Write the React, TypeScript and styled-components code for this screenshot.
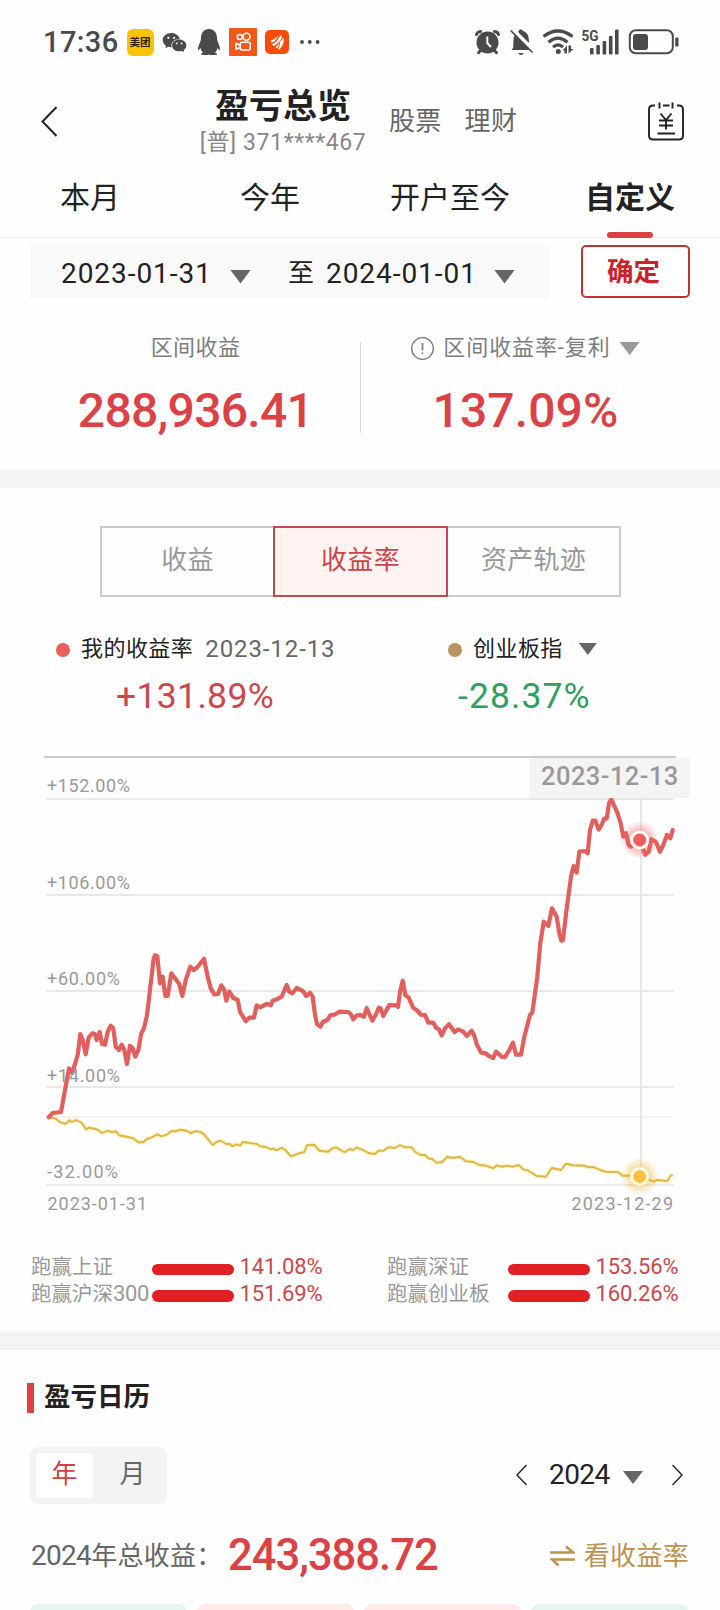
import React from "react";
import styled, { createGlobalStyle, css } from "styled-components";
import { FaQq } from "react-icons/fa";
import { AiFillWechat } from "react-icons/ai";

const colors = {
  ink: "#222222",
  mid: "#666666",
  soft: "#888888",
  pale: "#999999",
  red: "#dc4146",
  redText: "#c9484c",
  green: "#2f9e61",
  gold: "#bb9250",
  band: "#f4f4f4",
};

const GlobalStyle = createGlobalStyle`
  * { box-sizing: border-box; }
  body {
    margin: 0;
    background: #fefefe;
    font-family: Roboto, "Noto Sans CJK SC", sans-serif;
    color: ${colors.ink};
  }
`;

const Page = styled.main`
  width: 720px;
  height: 1610px;
  overflow: hidden;
  display: flex;
  flex-direction: column;
`;

/* ---------- status bar ---------- */

const StatusBar = styled.div`
  height: 84px;
  flex: none;
  padding: 0 41px 0 43px;
  display: flex;
  align-items: center;
  justify-content: space-between;
  color: #4a4a4a;
`;

const StatusGroup = styled.div<{ $gap: number }>`
  display: flex;
  align-items: center;
  gap: ${(p) => p.$gap}px;
`;

const Clock = styled.span`
  width: 76px;
  font-size: 29px;
  font-weight: 500;
  line-height: 36px;
  letter-spacing: 0.4px;
  white-space: nowrap;
`;

const MeituanBadge = styled.span`
  width: 27px;
  height: 27px;
  border-radius: 6px;
  background: #fcc400;
  color: #2a2200;
  font-size: 10.5px;
  font-weight: 700;
  line-height: 28px;
  text-align: center;
`;

const StatusSvg = styled.svg`
  display: block;
  flex: none;
`;

/* ---------- header ---------- */

const Header = styled.header`
  height: 76px;
  flex: none;
  padding: 0 36px 0 40px;
  display: flex;
  align-items: flex-start;
`;

const BackIcon = styled.svg`
  margin-top: 21px;
  display: block;
`;

const TitleBlock = styled.div`
  width: 170px;
  margin-left: 140px;
  display: flex;
  flex-direction: column;
  align-items: center;
`;

const Title = styled.h1`
  margin: 2px 0 0;
  font-size: 34px;
  font-weight: 700;
  line-height: 40px;
  white-space: nowrap;
`;

const Account = styled.span`
  margin-top: 1px;
  font-size: 23px;
  font-weight: 400;
  line-height: 32px;
  letter-spacing: 0.6px;
  color: #888888;
  white-space: nowrap;
`;

const HeaderLink = styled.span<{ $left: number }>`
  margin: 17px 0 0 ${(p) => p.$left}px;
  font-size: 26px;
  line-height: 40px;
  letter-spacing: 0.3px;
  color: ${colors.mid};
`;

const CalendarIcon = styled.svg`
  margin: 18px 0 0 auto;
  display: block;
`;

/* ---------- period tabs ---------- */

const Tabs = styled.nav`
  height: 78px;
  flex: none;
  display: grid;
  grid-template-columns: repeat(4, 1fr);
  border-bottom: 1px solid #ebebeb;
`;

const Tab = styled.div<{ $active?: boolean }>`
  position: relative;
  padding-top: 18px;
  font-size: 30px;
  font-weight: ${(p) => (p.$active ? 700 : 400)};
  line-height: 40px;
  text-align: center;

  ${(p) =>
    p.$active &&
    css`
      &::after {
        content: "";
        position: absolute;
        left: 67px;
        bottom: -1px;
        width: 46px;
        height: 6px;
        border-radius: 3px;
        background: ${colors.red};
      }
    `}
`;

/* ---------- custom range ---------- */

const RangeRow = styled.div`
  flex: none;
  height: 53px;
  margin: 7px 30px 0;
  display: flex;
  justify-content: space-between;
`;

const RangeBox = styled.div`
  width: 519px;
  height: 53px;
  padding-left: 31px;
  display: flex;
  align-items: center;
  background: #f9f9f9;
`;

const DateText = styled.span`
  width: 148px;
  font-size: 28px;
  line-height: 53px;
  padding-top: 3px;
  letter-spacing: 0.95px;
  white-space: nowrap;
`;

const RangeWord = styled.span`
  width: 27px;
  margin: 0 11px 0 37px;
  padding-top: 3px;
  font-size: 26px;
  line-height: 53px;
`;

const Arrow = styled.span<{ $w: number; $h: number; $color: string; $left: number; $top?: number }>`
  width: ${(p) => p.$w}px;
  height: ${(p) => p.$h}px;
  margin-left: ${(p) => p.$left}px;
  margin-top: ${(p) => p.$top ?? 0}px;
  flex: none;
  background: ${(p) => p.$color};
  clip-path: polygon(0 0, 100% 0, 50% 100%);
`;

const ConfirmButton = styled.button`
  width: 109px;
  height: 53px;
  padding: 1px 4px 0 0;
  border: 2px solid #bf3236;
  border-radius: 5px;
  background: #fff;
  color: #c92228;
  font-family: inherit;
  font-size: 26.5px;
  font-weight: 700;
  line-height: 48px;
`;

/* ---------- interval stats ---------- */

const Stats = styled.section`
  flex: none;
  height: 171px;
  padding-top: 33px;
  display: flex;
`;

const StatDivider = styled.div`
  width: 1px;
  height: 91px;
  margin-top: 11px;
  background: #dadada;
`;

const Stat = styled.div<{ $shift: number }>`
  flex: 1;
  padding-left: ${(p) => Math.max(0, p.$shift)}px;
  padding-right: ${(p) => Math.max(0, -p.$shift)}px;
  display: flex;
  flex-direction: column;
  align-items: center;
`;

const StatLabel = styled.div<{ $track: number }>`
  height: 34px;
  display: flex;
  align-items: center;
  font-size: 22px;
  line-height: 34px;
  letter-spacing: ${(p) => p.$track}px;
  color: #7d7d7d;
  white-space: nowrap;
`;

const InfoIcon = styled.svg`
  margin: 0 9px 0 0;
  display: block;
`;

const StatValue = styled.div<{ $track: number }>`
  margin-top: 16px;
  font-size: 48px;
  font-weight: 500;
  line-height: 60px;
  letter-spacing: ${(p) => p.$track}px;
  color: ${colors.red};
`;

const Band = styled.div`
  flex: none;
  height: 19px;
  background: ${colors.band};
`;

/* ---------- segmented control ---------- */

const Segments = styled.div`
  flex: none;
  width: 521px;
  height: 71px;
  margin: 38px 0 0 100px;
  display: flex;
`;

const Segment = styled.div<{ $active?: boolean }>`
  width: 175px;
  height: 71px;
  border: 2px solid ${(p) => (p.$active ? "#c6474b" : "#cbcbcb")};
  background: ${(p) => (p.$active ? "#fff3f2" : "transparent")};
  color: ${(p) => (p.$active ? "#cf4448" : colors.pale)};
  font-size: 26px;
  letter-spacing: 0.3px;
  line-height: 65px;
  text-align: center;
  position: relative;
  z-index: ${(p) => (p.$active ? 1 : 0)};

  & + & {
    margin-left: -2px;
  }
`;

/* ---------- legend ---------- */

const Legend = styled.div`
  flex: none;
  height: 160px;
  padding: 34px 0 0 56px;
  display: grid;
  grid-template-columns: 392px 1fr;
  align-content: start;
`;

const LegendName = styled.div`
  height: 36px;
  display: flex;
  align-items: center;
  font-size: 22px;
  line-height: 36px;
  letter-spacing: 0.45px;
  white-space: nowrap;
`;

const LegendDot = styled.i<{ $color: string }>`
  width: 13.5px;
  height: 14px;
  margin: 2px 11.5px 0 0;
  border-radius: 50%;
  background: ${(p) => p.$color};
`;

const LegendDate = styled.span`
  margin-left: 12px;
  font-size: 24px;
  letter-spacing: 0.9px;
  color: ${colors.mid};
`;

const LegendValue = styled.div<{ $color: string; $left: number; $track: number }>`
  padding-left: ${(p) => p.$left}px;
  margin-top: 7px;
  font-size: 35.5px;
  line-height: 44px;
  letter-spacing: ${(p) => p.$track}px;
  color: ${(p) => p.$color};
`;

/* ---------- chart ---------- */

const ChartArea = styled.div`
  position: relative;
  flex: none;
  height: 494px;
`;

const ChartSvg = styled.svg`
  display: block;
  overflow: visible;

  text {
    font-size: 18px;
    fill: #999999;
  }
`;

const ChartTooltip = styled.div`
  position: absolute;
  left: 529px;
  top: 1px;
  width: 161px;
  height: 40px;
  padding-left: 12px;
  background: ${colors.band};
  color: ${colors.pale};
  font-size: 25.5px;
  font-weight: 500;
  line-height: 37px;
  letter-spacing: 0.45px;
  white-space: nowrap;
`;

/* ---------- benchmark comparison ---------- */

const Benchmarks = styled.div`
  flex: none;
  height: 80px;
  padding: 3px 0 0 31px;
  display: grid;
  grid-template-columns: 356px 1fr;
  grid-auto-rows: 26.5px;
`;

const Benchmark = styled.div`
  display: flex;
  align-items: center;
  line-height: 26px;
  font-size: 20.5px;
  color: ${colors.pale};
  white-space: nowrap;
`;

const BenchmarkName = styled.span`
  width: 121px;

  b {
    font-weight: 400;
    font-size: 22px;
    letter-spacing: -0.4px;
  }
`;

const BenchmarkBar = styled.i`
  width: 82px;
  height: 11.5px;
  margin-top: 4px;
  border-radius: 6px;
  background: #e02022;
`;

const BenchmarkValue = styled.span`
  margin-left: 5.5px;
  font-size: 22px;
  letter-spacing: -0.1px;
  color: ${colors.redText};
`;

/* ---------- calendar section ---------- */

const SectionTitle = styled.h2`
  flex: none;
  height: 30px;
  margin: 33px 0 0 27px;
  padding-left: 10px;
  border-left: 7px solid #e04045;
  font-size: 26.5px;
  font-weight: 700;
  line-height: 27px;
`;

const CalendarControls = styled.div`
  flex: none;
  height: 57px;
  margin: 34px 37px 0 30px;
  display: flex;
  align-items: center;
  justify-content: space-between;
`;

const Toggle = styled.div`
  width: 137px;
  height: 57px;
  padding: 6px;
  display: flex;
  border-radius: 8px;
  background: #f3f3f3;
`;

const ToggleItem = styled.span<{ $active?: boolean }>`
  flex: none;
  width: ${(p) => (p.$active ? 57 : 79)}px;
  height: 45px;
  border-radius: 4px;
  background: ${(p) => (p.$active ? "#ffffff" : "transparent")};
  color: ${(p) => (p.$active ? "#cc4246" : colors.mid)};
  font-size: 26px;
  line-height: 43px;
  text-align: center;
`;

const YearPicker = styled.div`
  display: flex;
  align-items: center;
  font-size: 28px;
  line-height: 55px;
`;

const YearText = styled.span`
  width: 60px;
  margin: -2px 0 0 22px;
  letter-spacing: -0.6px;
`;

const StepIcon = styled.svg<{ $left?: number }>`
  display: block;
  margin-top: -1px;
  margin-left: ${(p) => p.$left ?? 0}px;
`;

const TotalRow = styled.div`
  flex: none;
  height: 56px;
  margin: 24px 31px 0 31px;
  display: flex;
  align-items: center;
`;

const TotalLabel = styled.span`
  width: 197px;
  font-size: 26px;
  line-height: 56px;
  letter-spacing: 0.3px;
  color: ${colors.mid};
  white-space: nowrap;

  b {
    font-weight: 400;
    font-size: 28px;
    letter-spacing: -0.7px;
  }
`;

const TotalValue = styled.span`
  font-size: 43.5px;
  font-weight: 500;
  line-height: 56px;
  letter-spacing: -1px;
  color: ${colors.red};
`;

const SwitchLink = styled.span`
  margin-left: auto;
  display: flex;
  align-items: center;
  gap: 9px;
  font-size: 26px;
  line-height: 56px;
  letter-spacing: 0.3px;
  color: ${colors.gold};
`;

const MonthGrid = styled.div`
  flex: none;
  margin: 20px 32px 0 30px;
  display: grid;
  grid-template-columns: repeat(4, 1fr);
  gap: 9.5px;
`;

const MonthCard = styled.div<{ $gain: boolean }>`
  height: 100px;
  border-radius: 8px;
  background: ${(p) => (p.$gain ? "#fdeae9" : "#e6f6ef")};
`;

/* ---------- chart data ---------- */

const myReturn =
  "48.7,1117.3 52.7,1113 61,1112 69,1068.3 72.3,1072.7 77.7,1055 80.3,1034 82.7,1040 85.7,1054.3 88.7,1037.3 92.3,1033.3 95,1034 96.7,1040 99.7,1032 102,1044 105,1044.7 107.7,1031.7 110.7,1025.7 113.3,1028.3 115.7,1046.7 119,1050 121.7,1044.7 124.3,1050 127,1064 130,1045.7 132.7,1048.3 135.3,1056.7 138.3,1050 141.3,1033.3 144,1028.3 147,1015 150,990 153.7,958.3 155,955.3 157.3,956 160,983.3 162.7,976.7 165.3,996 167.7,996 171.3,973.3 175,978.3 179.3,984 182.3,996 185.7,980 190.3,966.7 193.7,970 197.3,967.3 204,958.7 207.3,975 210.7,988.3 214.3,994.3 218,994 221.3,985.3 224.3,990 226.3,1000.7 229.3,991.7 233.3,998 237.7,1000 240,1011.7 245.7,1021.3 249.3,1017.7 254,1017.7 256.7,1005.3 260,1007.3 266.7,1004 270.7,1005.3 272.7,1000.7 276.7,999.3 281.7,996.7 286.7,985 289.3,991.7 292.3,993.3 296.7,988 303.3,991.3 306.3,996 310,992.7 312.7,996.7 315,1015 317,1024 320.3,1026.7 323.3,1021.7 327.3,1020 330.7,1015 334.3,1014.7 339.3,1011.7 348.3,1012 351,1014.3 353.3,1019.3 356.7,1015.3 360,1015 364,1016.7 366.7,1008 372.3,1020.7 375.7,1015 378.7,1007.7 380.7,1008.3 383.3,1016 389.3,1005 397.3,1005.3 398,1007 400,991.7 402.7,980.7 405.3,995 408.7,997.7 413.3,1008 416.7,1010 421.3,1015 425,1015 428.3,1022.7 433.3,1022.7 436,1027.7 439,1029.3 441.7,1035.3 445,1028.3 449,1024.3 454.7,1032.3 458,1029.3 463.3,1031.7 466.7,1036 471.7,1030.7 474,1035 477,1045 481.3,1052.7 485.7,1053.3 489,1056 493.3,1058 496,1051.7 501.7,1056.7 504.7,1057.3 509,1050.7 513,1042.7 516,1054.7 521,1054.7 524,1038.3 530,1015 532.3,1012.7 537.3,976.7 540.3,943.3 543.7,921.7 548.3,926 552,908.3 556.7,916.7 559.3,933.3 561.3,940.7 563,940 566.7,908.3 571.3,875 573.7,866 576.7,872.7 579.3,851.7 585,851 587.7,853.3 590,830 592.7,820.7 595.3,820.7 598.7,829.7 602,824 604,818.7 606.7,818.7 609,803.3 611.3,799.3 614,805.3 617.3,812.7 620.7,823.3 623.3,836.7 626,833.3 628.7,845 630.7,846.7 639.7,840 645.3,854.7 648.7,851.7 651.3,839.3 656,842 660,851.7 663.3,845 667,835 670.3,838.3 672.7,830";

const indexReturn =
  "48.7,1117.3 56,1118.7 60,1122.3 66,1123.7 69.3,1120.3 72,1122 76,1120 81.7,1122.7 86,1129.3 89.3,1127.7 96.7,1129.3 102.3,1133 107.7,1130.7 111.7,1132.3 116,1131.3 119,1135.3 128.3,1137 133.3,1138.3 138.3,1142.3 143.3,1142.3 146.7,1139 151.7,1137.3 157.3,1134.3 161.7,1136.3 166.7,1134.7 171.7,1130.7 175,1131.7 180,1129.7 186.7,1130.7 190.7,1133.3 195,1131.3 200,1131.7 204,1134.3 212.7,1145 216.7,1142 220.7,1140.7 226.7,1144.3 229.3,1143.7 232.3,1146.3 236.7,1144.3 240,1145.7 242.7,1142 256.7,1144 260,1146.3 266.7,1147.3 270.7,1149.3 273.3,1148.7 276.7,1150.3 281.7,1147.7 285,1149.7 290.7,1156 293.3,1155.7 300,1153 304,1152.3 307.3,1145 314.3,1144.7 319.3,1150.7 328.3,1151.7 331.7,1148.7 336,1147.3 344.3,1152.3 350,1149 353.3,1150 356.7,1147.3 360,1149 363.3,1150 368.3,1153 375,1154 378.3,1150.7 383.3,1150.7 388.3,1147.3 395,1148 400,1145 405,1147.3 411.7,1147.3 415,1151.7 420,1154.7 425,1155 428.3,1158.3 432.7,1159.3 436,1162.7 442.3,1162 447.3,1156.7 451.7,1157.7 460,1157 466,1161.3 473.3,1162 480,1165.3 485,1165.3 493.3,1168.3 496.7,1165.3 501.7,1166.7 506.7,1165.7 513.3,1166.7 518.7,1165 523.3,1169.3 528.3,1170.7 536.7,1176 546,1176.7 551.7,1168 561,1170 566,1163.7 573.3,1165.3 585,1165.7 588.3,1167.3 593.3,1167 600,1170 605,1171.7 618.3,1172.3 622.7,1175.7 639.7,1175.7 650,1180 653.3,1181.7 656.7,1180 667.3,1181 670.7,1175.7 672.7,1175";

const gridLabels = [
  { y: 799, text: "+152.00%", at: 792.3 },
  { y: 895, text: "+106.00%", at: 889.3 },
  { y: 991, text: "+60.00%", at: 985.3 },
  { y: 1087, text: "+14.00%", at: 1082 },
  { y: 1185, text: "-32.00%", at: 1178.3 },
];

const benchmarks = [
  { name: "跑赢上证", value: "141.08%" },
  { name: "跑赢深证", value: "153.56%" },
  { name: "跑赢沪深", suffix: "300", value: "151.69%" },
  { name: "跑赢创业板", value: "160.26%" },
];

const months = [false, true, true, false];

function ReturnChart() {
  return (
    <ChartArea>
      <ChartSvg width="720" height="494" viewBox="0 757 720 494">
        <defs>
          <radialGradient id="glowRed">
            <stop offset="0.4" stopColor="#f25c5c" stopOpacity="0.5" />
            <stop offset="1" stopColor="#f25c5c" stopOpacity="0" />
          </radialGradient>
          <radialGradient id="glowGold">
            <stop offset="0.4" stopColor="#f0b63c" stopOpacity="0.55" />
            <stop offset="1" stopColor="#f0b63c" stopOpacity="0" />
          </radialGradient>
        </defs>
        <path d="M44 757H676" stroke="#cccccc" strokeWidth="2" />
        {gridLabels.map((g) => (
          <path key={g.y} d={`M47 ${g.y}H673`} stroke="#e8e8e8" strokeWidth="2" />
        ))}
        <path d="M47 1117H673" stroke="#f3f3f3" strokeWidth="2" />
        <path d="M641 798V1185" stroke="#e2e2e2" strokeWidth="1.6" />
        <polyline points={indexReturn} fill="none" stroke="#fff3b8" strokeWidth="4" strokeLinejoin="round" />
        <polyline points={indexReturn} fill="none" stroke="#deb44e" strokeWidth="1.9" strokeLinejoin="round" />
        <polyline points={myReturn} fill="none" stroke="#e1605d" strokeWidth="4.2" strokeLinejoin="round" strokeLinecap="round" />
        {gridLabels.map((g) => (
          <text key={g.text} x="47" y={g.at} textLength={g.text.length === 8 ? 83 : g.text[0] === "+" ? 73 : 71}>
            {g.text}
          </text>
        ))}
        <text x="47.5" y="1209.8" textLength="99.5">2023-01-31</text>
        <text x="571.5" y="1209.8" textLength="101.5">2023-12-29</text>
        <circle cx="639.7" cy="840" r="19" fill="url(#glowRed)" />
        <circle cx="639.7" cy="840" r="8" fill="#f65c5c" stroke="#fff" strokeWidth="3" />
        <circle cx="639.7" cy="1176.5" r="19" fill="url(#glowGold)" />
        <circle cx="639.7" cy="1176.5" r="8" fill="#f8c140" stroke="#fffbe8" strokeWidth="3" />
      </ChartSvg>
      <ChartTooltip>2023-12-13</ChartTooltip>
    </ChartArea>
  );
}

function Status() {
  return (
    <StatusBar>
      <StatusGroup $gap={7.5}>
        <Clock>17:36</Clock>
        <MeituanBadge>美团</MeituanBadge>
        <AiFillWechat size={27} />
        <FaQq size={26} />
        <StatusSvg width="28" height="28" viewBox="0 0 28 28">
          <rect width="28" height="28" rx="1" fill="#f3581a" />
          <g fill="none" stroke="#fff" strokeWidth="1.6">
            <circle cx="10.8" cy="9" r="2.5" />
            <circle cx="17.5" cy="8.8" r="3.5" />
            <rect x="11.2" y="14.2" width="10" height="7.8" rx="2" />
            <path d="M11 17.2L7 15.3V21.4L11 19.5" strokeLinejoin="round" />
          </g>
        </StatusSvg>
        <StatusSvg width="24" height="24" viewBox="0 0 24 24">
          <rect width="24" height="24" rx="5" fill="#ff4a08" />
          <path d="M5.2 11C9 9.8 11.6 7.5 13 5.6C12.6 8.7 9.500 12 6.700 12.700ZM7 14.300C11 12.500 14 8.800 14.900 5.400L17.200 6.100C16.300 10.600 12.400 14.600 8.300 16ZM13 19.300C14.900 16.500 15.100 13.500 14.700 11.900C16.600 10.500 17.700 9 18.300 7.500C19.500 12.500 18 16.300 14.200 19.500ZM10.500 17.300C12.600 15.700 13.500 14.300 14 12.800C14.200 15.200 13.200 17.500 11.700 18.600Z" fill="#fff" />
        </StatusSvg>
        <StatusSvg width="26" height="6" viewBox="0 0 26 6" fill="currentColor">
          <circle cx="6" cy="3" r="1.900" />
          <circle cx="13.800" cy="3" r="1.900" />
          <circle cx="21.600" cy="3" r="1.900" />
        </StatusSvg>
      </StatusGroup>
      <StatusSvg width="206" height="30" viewBox="473 27 206 30" fill="currentColor">
        <circle cx="487.500" cy="42.500" r="11" />
        <g fill="none" stroke="currentColor" strokeWidth="3" strokeLinecap="round">
          <path d="M476.500 34.500Q477.300 31.800 480.500 31.500M494.500 31.500Q498 32 498.500 34.500M480.500 50.500L478.500 52.700M494.500 50.500L496.500 52.700" />
        </g>
        <path d="M487.300 36.500V43L491 47" fill="none" stroke="#fefefe" strokeWidth="2" />
        <path d="M513 48C514 45 512.500 38 515 34.500L530 50H511.500ZM518 31.500Q519.500 30.700 519.600 29.500H522Q522.500 31 523.500 31.200C528 33 529 36 529 43L519 33ZM518 53H524Q521 56.800 518 53Z" />
        <path d="M510.700 30.500L532.500 52.500" stroke="currentColor" strokeWidth="1.700" />
        <g fill="none" stroke="currentColor" strokeWidth="3.200">
          <path d="M543.500 36.500Q558 25.500 572.500 36.500M548.500 42.300Q558 34 567.500 42.300M553 47.200Q558 42.500 563 47.200" />
        </g>
        <circle cx="558.300" cy="51.500" r="2.500" />
        <path d="M562.500 50.500L567 45.500V53.500H564.500V50.500ZM568.500 45.500V53.500L573.500 49H571V45.500Z" />
        <text x="581.500" y="41" fontSize="15.500" fontWeight="700" textLength="17" lengthAdjust="spacingAndGlyphs">5G</text>
        <rect x="590" y="48" width="3.600" height="6.500" rx="1" />
        <rect x="596.300" y="45" width="3.600" height="9.500" rx="1" />
        <rect x="602.600" y="41" width="3.600" height="13.500" rx="1" />
        <rect x="608.900" y="36" width="3.600" height="18.500" rx="1" />
        <rect x="615" y="29.500" width="3.600" height="25" rx="1" />
        <rect x="629.800" y="30.300" width="43" height="23" rx="6" fill="none" stroke="currentColor" strokeWidth="2" />
        <rect x="633" y="34" width="15" height="16" rx="3" />
        <rect x="675.200" y="37.500" width="3.300" height="9" rx="1.200" />
      </StatusSvg>
    </StatusBar>
  );
}

export default function App() {
  return (
    <Page>
      <GlobalStyle />
      <Status />

      <Header>
        <BackIcon width="18" height="32" viewBox="0 0 18 32" fill="none" stroke="#222" strokeWidth="2">
          <path d="M16.500 2L2.500 16.500L16.500 31" />
        </BackIcon>
        <TitleBlock>
          <Title>盈亏总览</Title>
          <Account>[普] 371****467</Account>
        </TitleBlock>
        <HeaderLink $left={21}>股票</HeaderLink>
        <HeaderLink $left={23}>理财</HeaderLink>
        <CalendarIcon width="36" height="39" viewBox="0 0 36 39" fill="none" stroke="#222" strokeWidth="1.900">
          <path d="M7 3.500H5Q1 3.500 1 7.500V33.500Q1 37.500 5 37.500H31Q35 37.500 35 33.500V7.500Q35 3.500 31 3.500H29M15 3.500H21.500M11.500 0.500V6.500M24.500 0.500V6.500M12.500 11.500L18 18L23.500 11.500M11 18.500H25M11 23.500H25M18 18V27.500M9.500 31.500H27" />
        </CalendarIcon>
      </Header>

      <Tabs>
        <Tab>本月</Tab>
        <Tab>今年</Tab>
        <Tab>开户至今</Tab>
        <Tab $active>自定义</Tab>
      </Tabs>

      <RangeRow>
        <RangeBox>
          <DateText>2023-01-31</DateText>
          <Arrow $w={21} $h={14} $color="#666" $left={21} $top={10} />
          <RangeWord>至</RangeWord>
          <DateText>2024-01-01</DateText>
          <Arrow $w={21} $h={14} $color="#666" $left={20} $top={10} />
        </RangeBox>
        <ConfirmButton>确定</ConfirmButton>
      </RangeRow>

      <Stats>
        <Stat $shift={31}>
          <StatLabel $track={0.4}>区间收益</StatLabel>
          <StatValue $track={-0.7}>288,936.41</StatValue>
        </Stat>
        <StatDivider />
        <Stat $shift={-30}>
          <StatLabel $track={0.9}>
            <InfoIcon width="23" height="23" viewBox="0 0 23 23" fill="none" stroke="#777">
              <circle cx="11.500" cy="11.500" r="10.800" strokeWidth="1.300" />
              <path d="M11.500 6V13.500M11.500 15.500V17.300" strokeWidth="1.600" />
            </InfoIcon>
            区间收益率-复利
            <Arrow $w={20} $h={13} $color="#999" $left={9} $top={1} />
          </StatLabel>
          <StatValue $track={0.1}>137.09%</StatValue>
        </Stat>
      </Stats>

      <Band />

      <Segments>
        <Segment>收益</Segment>
        <Segment $active>收益率</Segment>
        <Segment>资产轨迹</Segment>
      </Segments>

      <Legend>
        <div>
          <LegendName>
            <LegendDot $color="#e85f5c" />
            我的收益率
            <LegendDate>2023-12-13</LegendDate>
          </LegendName>
          <LegendValue $color={colors.redText} $left={60} $track={0.35}>+131.89%</LegendValue>
        </div>
        <div>
          <LegendName>
            <LegendDot $color="#bb935f" />
            创业板指
            <Arrow $w={18} $h={12} $color="#666" $left={16} />
          </LegendName>
          <LegendValue $color={colors.green} $left={10} $track={1.1}>-28.37%</LegendValue>
        </div>
      </Legend>

      <ReturnChart />

      <Benchmarks>
        {benchmarks.map((b) => (
          <Benchmark key={b.name}>
            <BenchmarkName>
              {b.name}
              {b.suffix && <b>{b.suffix}</b>}
            </BenchmarkName>
            <BenchmarkBar />
            <BenchmarkValue>{b.value}</BenchmarkValue>
          </Benchmark>
        ))}
      </Benchmarks>

      <Band />

      <SectionTitle>盈亏日历</SectionTitle>

      <CalendarControls>
        <Toggle>
          <ToggleItem $active>年</ToggleItem>
          <ToggleItem>月</ToggleItem>
        </Toggle>
        <YearPicker>
          <StepIcon width="11" height="22" viewBox="0 0 11 22" fill="none" stroke="#222" strokeWidth="1.400">
            <path d="M10.500 1L1 11L10.500 21" />
          </StepIcon>
          <YearText>2024</YearText>
          <Arrow $w={20} $h={13} $color="#666" $left={14} $top={4} />
          <StepIcon $left={29} width="11" height="22" viewBox="0 0 11 22" fill="none" stroke="#222" strokeWidth="1.400">
            <path d="M0.500 1L10 11L0.500 21" />
          </StepIcon>
        </YearPicker>
      </CalendarControls>

      <TotalRow>
        <TotalLabel>
          <b>2024</b>年总收益：
        </TotalLabel>
        <TotalValue>243,388.72</TotalValue>
        <SwitchLink>
          <svg width="25" height="22" viewBox="0 0 25 22" fill="none" stroke={colors.gold} strokeWidth="2.500">
            <path d="M0 7.500H23L16 1.500M25 14.500H2L8.500 20.500" />
          </svg>
          看收益率
        </SwitchLink>
      </TotalRow>

      <MonthGrid>
        {months.map((gain, i) => (
          <MonthCard key={i} $gain={gain} />
        ))}
      </MonthGrid>
    </Page>
  );
}
